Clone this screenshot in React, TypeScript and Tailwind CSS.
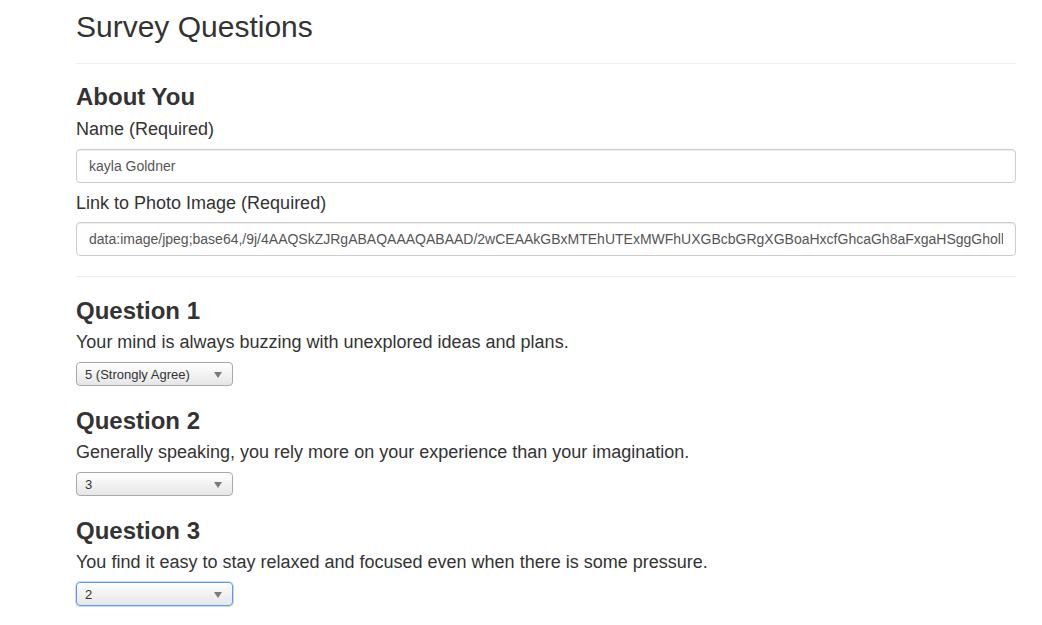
import React from 'react';

const questions = [
    { title: 'Question 1', text: 'Your mind is always buzzing with unexplored ideas and plans.', value: '5 (Strongly Agree)' },
    { title: 'Question 2', text: 'Generally speaking, you rely more on your experience than your imagination.', value: '3' },
    { title: 'Question 3', text: 'You find it easy to stay relaxed and focused even when there is some pressure.', value: '2', focused: true },
];

const photo =
    'data:image/jpeg;base64,/9j/4AAQSkZJRgABAQAAAQABAAD/2wCEAAkGBxMTEhUTExMWFhUXGBcbGRgXGBoaHxcfGhcaGh8aFxgaHSggGholleHTDfRgQkWkA';

const FakeSelect: React.FC<{ value: string; focused?: boolean }> = ({ value, focused }) => (
    <div
        className={
            focused
                ? 'relative mt-[10px] w-[157px] h-[24px] rounded-[4px] border border-[#5a9bef] shadow-[0_0_0_1px_rgba(90,155,239,0.35)] bg-gradient-to-b from-[#ffffff] to-[#e6e6e6] flex items-center pl-[8px] text-[13px] text-[#333] leading-none'
                : 'relative mt-[10px] w-[157px] h-[24px] rounded-[4px] border border-[#a9a9a9] bg-gradient-to-b from-[#ffffff] to-[#e6e6e6] flex items-center pl-[8px] text-[13px] text-[#333] leading-none'
        }
    >
        {value}
        <span className="absolute right-[10px] top-[9px] w-0 h-0 border-l-[4px] border-r-[4px] border-t-[6px] border-l-transparent border-r-transparent border-t-[#7b7b7b]" />
    </div>
);

const App: React.FC = () => {
    return (
        <div className="min-h-screen bg-white text-[#333] font-['Liberation_Sans',Arial,sans-serif]">
            <div className="ml-[76px] w-[940px] pt-[10px]">
                {/* Header */}
                <div className="pb-[19px] border-b border-[#eeeeee]">
                    <h1 className="text-[30px] leading-[34px] font-normal">Survey Questions</h1>
                </div>

                {/* About */}
                <h3 className="mt-[20px] text-[24px] leading-[26px] font-bold">About You</h3>
                <div className="mt-[9px] text-[18px] leading-[20px]">Name (Required)</div>
                <input
                    readOnly
                    value="kayla Goldner"
                    className="mt-[10px] block w-full h-[34px] px-[12px] rounded-[4px] border border-[#cccccc] shadow-[inset_0_1px_1px_rgba(0,0,0,0.075)] text-[14px] text-[#555] outline-none"
                />
                <div className="mt-[10px] text-[18px] leading-[20px]">Link to Photo Image (Required)</div>
                <input
                    readOnly
                    value={photo}
                    className="mt-[9px] block w-full h-[34px] px-[12px] rounded-[4px] border border-[#cccccc] shadow-[inset_0_1px_1px_rgba(0,0,0,0.075)] text-[14px] text-[#555] outline-none"
                />
                <div className="mt-[20px] border-t border-[#eeeeee]" />

                {/* Questions */}
                {questions.map((q, i) => (
                    <div key={q.title} className={i === 0 ? 'mt-[21px]' : 'mt-[22px]'}>
                        <h3 className="text-[24px] leading-[26px] font-bold">{q.title}</h3>
                        <p className="mt-[8px] text-[18px] leading-[20px]">{q.text}</p>
                        <FakeSelect value={q.value} focused={q.focused} />
                    </div>
                ))}
            </div>
        </div>
    );
};

export default App;
